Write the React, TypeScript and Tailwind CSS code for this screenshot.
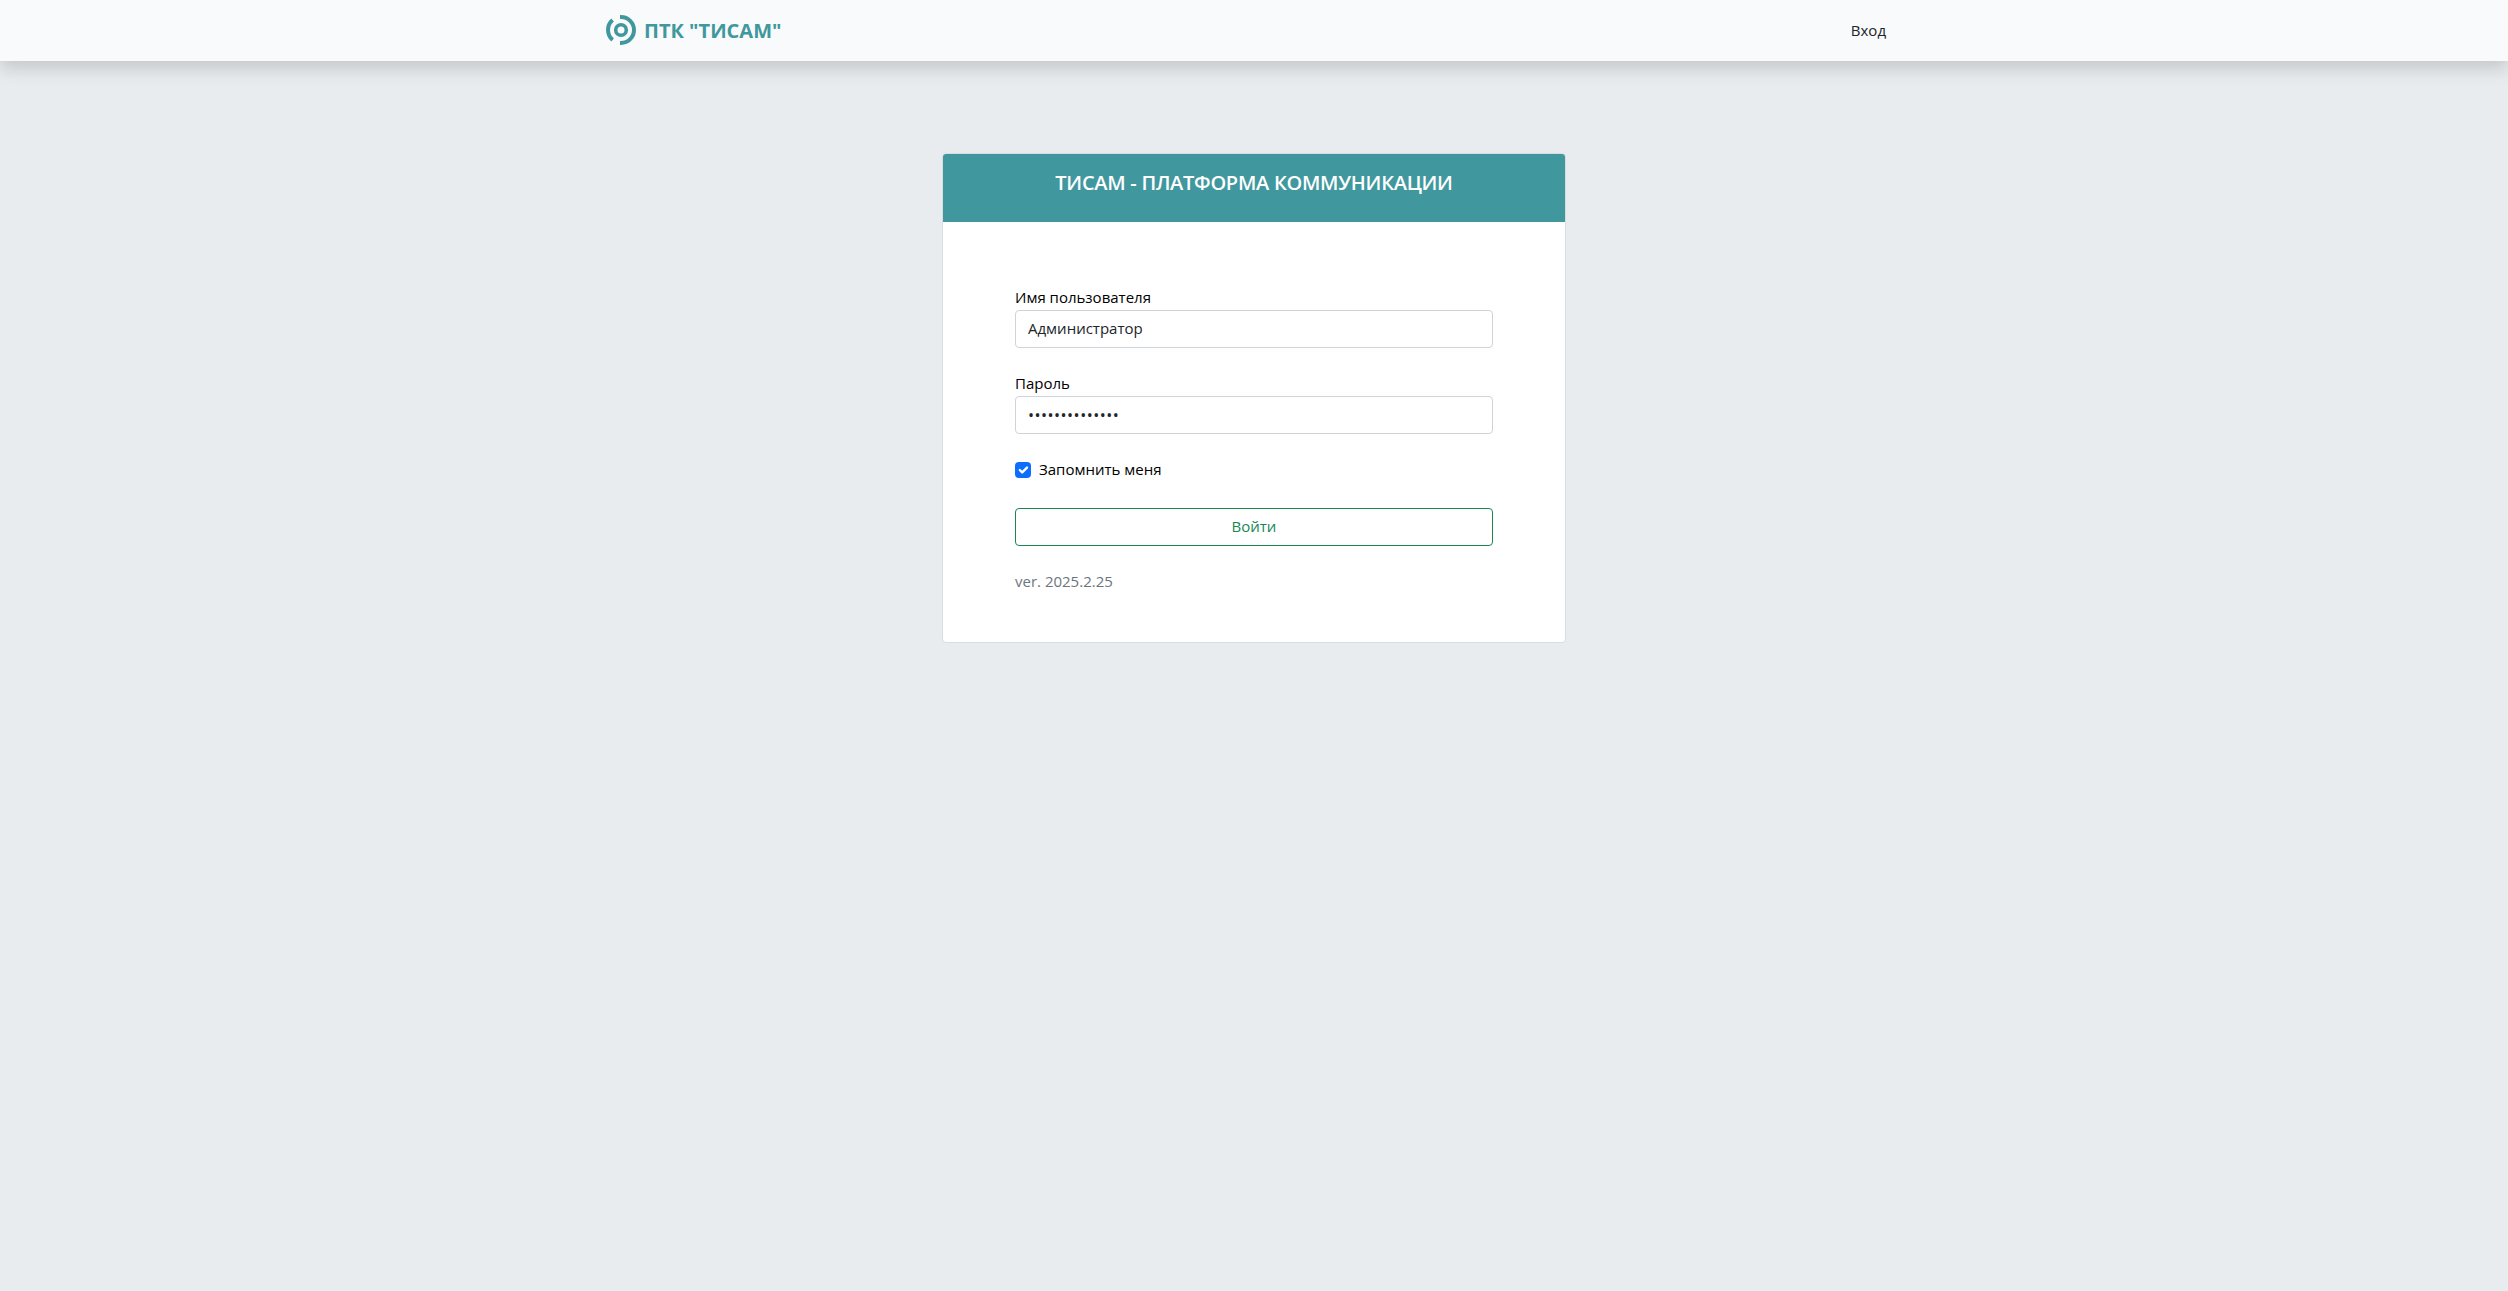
import React from "react";

function Logo() {
  return (
    <svg width="30" height="30" viewBox="0 0 30 30" fill="none" stroke="#40989e" strokeWidth="4" className="shrink-0">
      <circle cx="15" cy="15" r="5.3" strokeWidth="3.6" />
      <path d="M14 2 H15 A13 13 0 0 1 15 28 H14" />
      <path d="M6.6 5.1 A13 13 0 0 0 6.6 24.9" />
    </svg>
  );
}

const field =
  "block h-[38px] w-full rounded-[4px] border border-[#ced4da] bg-white px-3 text-[#212529] outline-none";

export default function App() {
  return (
    <div className="h-[1291px] overflow-hidden bg-[#e8ecef] font-['Open_Sans','Noto_Sans',sans-serif] text-[15px] leading-[22px] text-[#212529]">
      <nav className="h-[61px] bg-[#f8fafc] shadow-[0_8px_16px_rgba(0,0,0,0.15)]">
        <div className="mx-auto flex h-[60px] w-[1296px] items-center justify-between">
          <a className="flex items-center gap-2 text-[20px] font-bold text-[#40989e]">
            <Logo />
            <span className="pt-0.5">ПТК "ТИСАМ"</span>
          </a>
          <a className="mr-4">Вход</a>
        </div>
      </nav>
      <main className="pt-[92px]">
        <div className="mx-auto w-[624px] overflow-hidden rounded-[4px] border border-[#d9dddf] bg-white">
          <div className="h-[68px] bg-[#40989e] pt-[17px] text-center text-[20px] leading-6 font-semibold tracking-[-0.27px] text-white">
            <h5>ТИСАМ - ПЛАТФОРМА КОММУНИКАЦИИ</h5>
          </div>
          <form className="px-[72px] pt-16 pb-12 text-black">
            <label className="block h-6">Имя пользователя</label>
            <input className={`${field} pb-0.5`} defaultValue="Администратор" />
            <label className="mt-6 block h-6">Пароль</label>
            <input type="password" className={`${field} text-[16px] tracking-[0.5px]`} defaultValue="12345678901234" />
            <label className="mt-6 flex h-6 items-start gap-2">
              <span className="mt-1 flex size-4 items-center justify-center rounded-[4px] bg-[#0d6efd]">
                <svg viewBox="0 0 20 20" className="size-4" fill="none" stroke="#fff" strokeWidth="3" strokeLinecap="round" strokeLinejoin="round">
                  <path d="M6 10l3 3l6-6" />
                </svg>
              </span>
              <span>Запомнить меня</span>
            </label>
            <button type="button" className="mt-[26px] block h-[38px] w-full rounded-[4px] border border-[#198754] pb-0.5 text-[#198754]">
              <span>Войти</span>
            </button>
            <p className="mt-6 h-6 text-[#6c757d]">ver. 2025.2.25</p>
          </form>
        </div>
      </main>
    </div>
  );
}
